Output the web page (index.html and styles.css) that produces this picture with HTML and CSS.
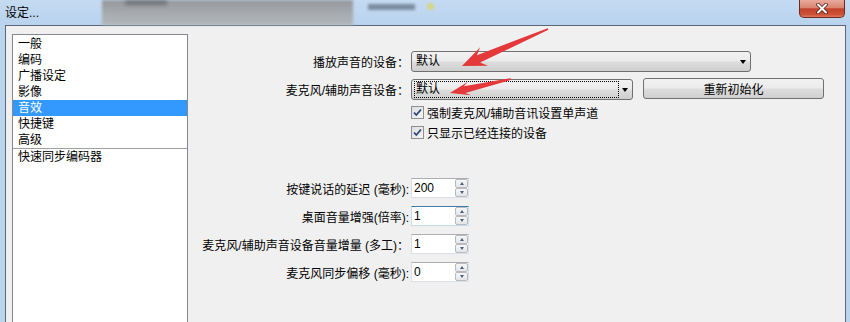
FILE: index.html
```html
<!DOCTYPE html>
<html lang="zh-CN">
<head>
  <meta charset="UTF-8">
  <title>设定...</title>
  <link rel="stylesheet" href="styles.css">
</head>
<body>

  <div class="window">
    <!-- Title bar -->
    <div class="titlebar">
      <span class="caption">设定...</span>
      <div class="behind"><div class="behind-text"></div></div>
      <div class="behind-label"></div>
      <div class="behind-dot"></div>
      <div class="spacer"></div>
      <div class="close">
        <svg width="12" height="11" viewBox="0 0 12 11">
          <path d="M2 1.5 L10 9.5 M10 1.5 L2 9.5" stroke="#5a1e16" stroke-width="3.6" stroke-linecap="round"/>
          <path d="M2 1.5 L10 9.5 M10 1.5 L2 9.5" stroke="#fff" stroke-width="2" stroke-linecap="round"/>
        </svg>
      </div>
    </div>

    <div class="frame">
      <div class="client">
        <ul class="list">
          <li>一般</li>
          <li>编码</li>
          <li>广播设定</li>
          <li>影像</li>
          <li class="sel">音效</li>
          <li>快捷键</li>
          <li>高级</li>
          <li class="sep"></li>
          <li>快速同步编码器</li>
        </ul>

        <div class="panel">
          <div class="row">
            <span class="label">播放声音的设备：</span>
            <div class="combo wide">
              <span class="combo-text">默认</span>
              <span class="drop"></span>
            </div>
          </div>
          <div class="row">
            <span class="label">麦克风/辅助声音设备：</span>
            <div class="combo narrow">
              <span class="combo-text focus">默认</span>
              <span class="drop"></span>
            </div>
            <button class="btn">重新初始化</button>
          </div>

          <div class="checks">
            <label class="check">
              <span class="box">
                <svg width="11" height="11" viewBox="0 0 11 11"><path d="M2 5.5 L4.3 8 L9 2.5" fill="none" stroke="#2d4477" stroke-width="1.8"/></svg>
              </span>
              强制麦克风/辅助音讯设置单声道
            </label>
            <label class="check">
              <span class="box">
                <svg width="11" height="11" viewBox="0 0 11 11"><path d="M2 5.5 L4.3 8 L9 2.5" fill="none" stroke="#2d4477" stroke-width="1.8"/></svg>
              </span>
              只显示已经连接的设备
            </label>
          </div>

          <div class="spins">
            <div class="row spin-row">
              <span class="label">按键说话的延迟 (毫秒):</span>
              <div class="spin">
                <span class="value">200</span>
                <span class="arrows-col"><span class="up"></span><span class="down"></span></span>
              </div>
            </div>
            <div class="row spin-row">
              <span class="label">桌面音量增强(倍率):</span>
              <div class="spin hot">
                <span class="value">1</span>
                <span class="arrows-col"><span class="up"></span><span class="down"></span></span>
              </div>
            </div>
            <div class="row spin-row">
              <span class="label">麦克风/辅助声音设备音量增量 (多工)：</span>
              <div class="spin">
                <span class="value">1</span>
                <span class="arrows-col"><span class="up"></span><span class="down"></span></span>
              </div>
            </div>
            <div class="row spin-row last">
              <span class="label">麦克风同步偏移 (毫秒):</span>
              <div class="spin">
                <span class="value">0</span>
                <span class="arrows-col"><span class="up"></span><span class="down"></span></span>
              </div>
            </div>
          </div>
        </div>
      </div>
    </div>
  </div>

  <!-- red annotation arrows drawn over the dialog -->
  <svg class="marks" width="850" height="322" viewBox="0 0 850 322">
    <polygon fill="#e5383b" points="547.6,28.2 476.9,55.2 480.1,47.3 462,66 488,65.7 480.1,62.6 548.4,29.8"/>
    <polygon fill="#e5383b" points="510.8,78.2 463.8,86.2 467.9,81.7 450,93 471.1,95.3 465.4,93 511.2,79.8"/>
  </svg>

</body>
</html>
```

FILE: styles.css
```css
body {
  margin: 0;
  width: 850px;
  height: 322px;
  overflow: hidden;
  position: relative;
  background: #bcd5ee;
  font-family: "Liberation Sans", "Noto Sans CJK SC", sans-serif;
  font-size: 12px;
  color: #000;
}

.window {
  display: flex;
  flex-direction: column;
  height: 322px;
}

/* Title bar */
.titlebar {
  height: 25px;
  display: flex;
  align-items: flex-start;
  flex: none;
  background: linear-gradient(#c4dbf1, #b9d3ee);
}

.caption {
  width: 97px;
  padding-left: 5px;
  align-self: center;
  line-height: 14px;
}

.behind {
  width: 251px;
  height: 25px;
  background: linear-gradient(#94979b, #a9acb0 60%, #b1b4b7);
  filter: blur(1.5px);
}

.behind-text {
  margin: 0 0 0 23px;
  width: 42px;
  height: 5px;
  background: #6f7378;
  filter: blur(1.5px);
}

.behind-label {
  margin: 4px 0 0 15px;
  width: 47px;
  height: 6px;
  background: #7b8ba0;
  filter: blur(1.5px);
}

.behind-dot {
  margin: 3px 0 0 12px;
  width: 7px;
  height: 7px;
  border-radius: 50%;
  background: #d4d780;
  filter: blur(1px);
}

.spacer {
  flex: 1;
}

.close {
  width: 44px;
  height: 17px;
  margin-right: 5px;
  border: 1px solid #6d2a21;
  border-top: none;
  border-radius: 0 0 5px 5px;
  background: linear-gradient(#e9ab9c 0%, #d98571 45%, #c3412c 52%, #cc5237 85%, #e27a5c 100%);
  display: flex;
  align-items: center;
  justify-content: center;
}

/* Frame and client area */
.frame {
  flex: 1;
  display: flex;
  padding: 0 4px 0 5px;
  min-height: 0;
}

.client {
  flex: 1;
  display: flex;
  background: #f0f0f0;
  border: 1px solid #5b6777;
  border-bottom: none;
  overflow: hidden;
}

/* Category list (runs on past the bottom of the dialog crop) */
.list {
  list-style: none;
  margin: 8px 0 0 6px;
  padding: 1px 0 0;
  width: 174px;
  height: 286px;
  flex: none;
  background: #fff;
  border: 1px solid #828790;
  border-bottom: none;
}

.list li {
  height: 16px;
  line-height: 16px;
  padding-left: 5px;
  white-space: nowrap;
}

.list li.sel {
  background: #3399ff;
  color: #fff;
}

.list li.sep {
  height: 1px;
  padding: 0;
  background: #a0a0a0;
}

/* Right panel */
.panel {
  flex: 1;
  padding-top: 25px;
}

.row {
  display: flex;
  align-items: center;
  height: 21px;
  margin-bottom: 7px;
}

.label {
  width: 221px;
  margin-right: 2px;
  flex: none;
  text-align: right;
  white-space: nowrap;
}

.combo,
.btn {
  box-sizing: border-box;
  height: 21px;
  border: 1px solid #707070;
  border-radius: 3px;
  background: linear-gradient(#f2f2f2 0%, #ebebeb 48%, #dddddd 52%, #cfcfcf 100%);
}

.combo {
  display: flex;
  align-items: center;
}

.combo.wide {
  width: 340px;
}

.combo.narrow {
  width: 222px;
}

.combo-text {
  flex: 1;
  height: 15px;
  line-height: 15px;
  margin: 0 1px 0 2px;
  padding-left: 1px;
  border: 1px dotted transparent;
}

.combo-text.focus {
  border-color: #000;
}

.drop {
  width: 0;
  height: 0;
  margin: 0 4px 0 2px;
  border-left: 3.5px solid transparent;
  border-right: 3.5px solid transparent;
  border-top: 4px solid #000;
}

.btn {
  width: 181px;
  margin: -2px 0 0 10px;
  padding: 0;
  font: inherit;
  color: #000;
  text-align: center;
}

/* Check boxes */
.checks {
  margin: -5px 0 0 223px;
}

.check {
  display: flex;
  align-items: center;
  height: 20px;
  white-space: nowrap;
}

.box {
  box-sizing: border-box;
  width: 13px;
  height: 13px;
  margin-right: 3px;
  border: 1px solid #8e8f8f;
  background: linear-gradient(135deg, #dcdee2, #f6f6f6);
  display: flex;
  align-items: center;
  justify-content: center;
}

/* Spin boxes */
.spins {
  margin-top: 36px;
}

.spin-row {
  height: 20px;
  margin-bottom: 8px;
}

.spin-row.last {
  margin-bottom: 0;
}

.spin {
  box-sizing: border-box;
  width: 58px;
  height: 20px;
  display: flex;
  background: #fff;
  border: 1px solid #dbdfe6;
  border-top-color: #abadb3;
}

.spin.hot {
  border-color: #c5daed;
  border-top-color: #3d7bad;
}

.value {
  flex: 1;
  padding-left: 2px;
  line-height: 18px;
}

.arrows-col {
  width: 13px;
  display: flex;
  flex-direction: column;
}

.arrows-col span {
  box-sizing: border-box;
  flex: 1;
  border: 1px solid #b7bac0;
  border-radius: 2px;
  background: linear-gradient(#f7f7f7, #e3e5e8);
  display: flex;
  align-items: center;
  justify-content: center;
}

.up::after,
.down::after {
  content: "";
  width: 0;
  height: 0;
  border-left: 2.5px solid transparent;
  border-right: 2.5px solid transparent;
}

.up::after {
  border-bottom: 3px solid #4f5e7a;
}

.down::after {
  border-top: 3px solid #4f5e7a;
}

/* Annotation overlay */
.marks {
  position: absolute;
  top: 0;
  left: 0;
  pointer-events: none;
}
```
